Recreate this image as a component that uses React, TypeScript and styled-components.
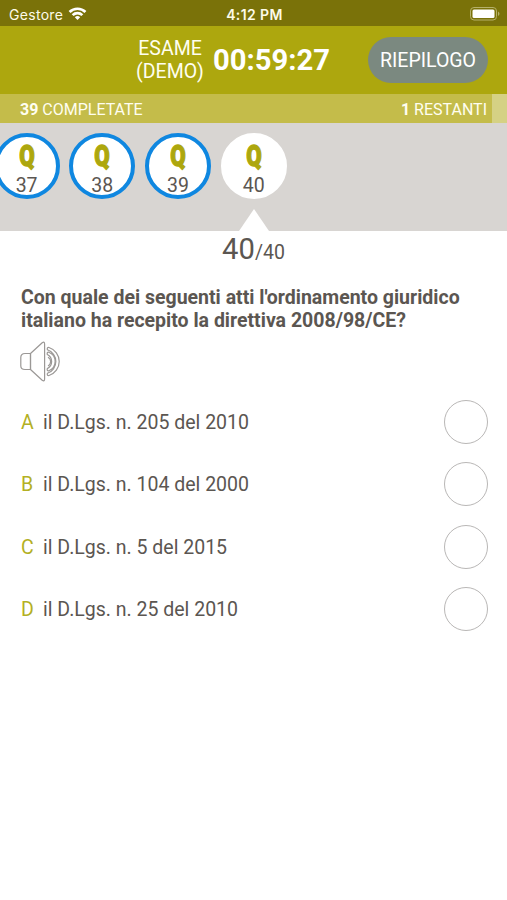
import React from "react";
import styled, { createGlobalStyle } from "styled-components";

const Global = createGlobalStyle`
  * { box-sizing: border-box; }
  body {
    margin: 0;
    background: #fff;
    font-family: Roboto, "Liberation Sans", sans-serif;
    color: #5b5651;
  }
`;

const Screen = styled.main`
  width: 507px;
  height: 900px;
  display: flex;
  flex-direction: column;
  overflow: hidden;
  background: #fff;
`;

const StatusBar = styled.div`
  height: 26px;
  flex: none;
  display: grid;
  grid-template-columns: 1fr auto 1fr;
  align-items: center;
  padding: 2px 7px 0 9px;
  background: #7a7209;
  color: #fdfbe9;
  font-family: Inter, Roboto, sans-serif;
  font-size: 14px;
`;

const Carrier = styled.div`
  display: flex;
  align-items: center;
  gap: 5px;
  letter-spacing: 0.3px;
`;

const Clock = styled.div`
  font-weight: 600;
  letter-spacing: 0.4px;
`;

const BatterySlot = styled.div`
  display: flex;
  justify-content: flex-end;
`;

const Header = styled.header`
  height: 68px;
  flex: none;
  display: flex;
  align-items: center;
  padding: 0 19px 0 136px;
  background: #ada70e;
  color: #fffef0;
`;

const ExamName = styled.div`
  width: 68px;
  text-align: center;
  font-size: 19.5px;
  line-height: 23px;
  white-space: nowrap;
`;

const Timer = styled.div`
  margin-left: 9px;
  font-size: 29.2px;
  font-weight: 700;
  line-height: 36px;
  color: #fff;
  white-space: nowrap;
`;

const SummaryButton = styled.button`
  width: 120px;
  height: 46px;
  margin-left: auto;
  padding: 1px 0 0;
  border: 0;
  border-radius: 23px;
  background: #7b8980;
  color: #fff;
  font: 400 19.5px Roboto, sans-serif;
`;

const Progress = styled.div`
  height: 29px;
  flex: none;
  display: flex;
  background: #d5d184;
`;

const ProgressFill = styled.div`
  width: 492px;
  display: flex;
  align-items: center;
  justify-content: space-between;
  padding: 1px 5px 0 20px;
  background: #c4bc4a;
  color: #fffef0;
  font-size: 16px;
`;

const QuestionStrip = styled.nav`
  height: 108px;
  flex: none;
  display: flex;
  align-items: flex-start;
  gap: 9.7px;
  padding-top: 10px;
  background: #d8d5d2;
`;

const Bubble = styled.div<{ $done?: boolean }>`
  position: relative;
  flex: none;
  width: 66px;
  height: 66px;
  display: flex;
  flex-direction: column;
  align-items: center;
  border: 4px solid ${(p) => (p.$done ? "#0f87e0" : "#fff")};
  border-radius: 50%;
  background: #fff;

  &:first-child {
    margin-left: -6.4px;
  }
`;

const BubbleMark = styled.span`
  height: 31px;
  margin-top: 4px;
  font-size: 29px;
  line-height: 31px;
  font-weight: 900;
  color: #ada70e;
  -webkit-text-stroke: 1.3px #ada70e;
  transform: scaleX(0.77);
`;

const BubbleNumber = styled.span`
  margin-top: 3px;
  font-size: 19.5px;
  line-height: 22px;
`;

const Pointer = styled.i`
  position: absolute;
  top: 72px;
  left: 14px;
  border: 15px solid transparent;
  border-top: 0;
  border-bottom: 22px solid #fff;
`;

const Counter = styled.div`
  height: 36px;
  flex: none;
  text-align: center;
  font-size: 29.2px;
  line-height: 37px;
`;

const CounterTotal = styled.span`
  font-size: 19.5px;
`;

const Question = styled.h1`
  margin: 19px 0 0 21px;
  font-size: 19.5px;
  line-height: 23px;
  font-weight: 700;
  white-space: nowrap;
`;

const Speaker = styled.button`
  width: 42px;
  height: 42px;
  margin: 8px 0 0 19px;
  padding: 0;
  border: 0;
  background: none;
  flex: none;
`;

const Answers = styled.ul`
  margin: 9px 0 0;
  padding: 0 19px 0 21px;
  list-style: none;
`;

const Answer = styled.li`
  height: 62.3px;
  display: flex;
  align-items: center;
  font-size: 19.5px;
  line-height: 24px;
`;

const Letter = styled.span`
  width: 22px;
  padding-top: 2px;
  color: #b3b024;
`;

const AnswerText = styled.span`
  flex: 1;
  padding-top: 2px;
`;

const Radio = styled.span`
  width: 44px;
  height: 44px;
  border: 1.5px solid #b9b7b6;
  border-radius: 50%;
`;

const WifiIcon = () => (
  <svg width="19" height="15" viewBox="0 0 19 15" fill="#fff">
    <path d="M.6 4.1a12.6 12.6 0 0 1 17.8 0L16.5 6a9.9 9.9 0 0 0-14 0Z" />
    <path d="M3.7 7.2a8.2 8.2 0 0 1 11.6 0l-1.9 1.9a5.5 5.5 0 0 0-7.8 0Z" />
    <path d="M6.8 10.3a3.8 3.8 0 0 1 5.4 0L9.5 13Z" />
  </svg>
);

const BatteryIcon = () => (
  <svg width="31" height="15" viewBox="0 0 31 15" fill="none">
    <rect x="1.5" y=".5" width="26" height="12.5" rx="3.5" stroke="#b5b06a" />
    <rect x="3.5" y="2.5" width="22" height="8.5" rx="1.5" fill="#fff" />
    <path d="M29 4.5V9q1.5-.7 1.5-2.25T29 4.5Z" fill="#b5b06a" />
  </svg>
);

const SpeakerIcon = () => (
  <svg
    width="42"
    height="42"
    viewBox="0 0 42 42"
    fill="none"
    stroke="#9b9896"
    strokeWidth="1.2"
    strokeLinejoin="round"
  >
    <path d="M11.5 13.5H6Q1.8 13.5 1.8 17.5V26Q1.8 29.5 6 29.5H11.5Z" />
    <path d="M11.5 13.5 23.2 2.8Q25.6 1.2 25.6 4V39Q25.6 41.8 23.2 40.3L11.5 29.5Z" />
    <path d="M30 7.5A14.7 14.7 0 0 1 30 35.5Q27.8 35.8 28.4 33.3A12.4 12.4 0 0 0 28.4 9.8Q27.8 7.2 30 7.5Z" />
    <path d="M29.8 12.2A10 10 0 0 1 29.8 30.8Q27.7 31 28.3 28.6A7.9 7.9 0 0 0 28.3 14.5Q27.7 12 29.8 12.2Z" />
    <path d="M29 17.2A5 5 0 0 1 29 26" />
  </svg>
);

const questions = [37, 38, 39, 40];
const current = 40;
const answers = [
  ["A", "il D.Lgs. n. 205 del 2010"],
  ["B", "il D.Lgs. n. 104 del 2000"],
  ["C", "il D.Lgs. n. 5 del 2015"],
  ["D", "il D.Lgs. n. 25 del 2010"],
];

export default function App() {
  return (
    <Screen>
      <Global />
      <StatusBar>
        <Carrier>
          Gestore <WifiIcon />
        </Carrier>
        <Clock>4:12 PM</Clock>
        <BatterySlot>
          <BatteryIcon />
        </BatterySlot>
      </StatusBar>
      <Header>
        <ExamName>
          ESAME
          <br />
          (DEMO)
        </ExamName>
        <Timer>00:59:27</Timer>
        <SummaryButton>RIEPILOGO</SummaryButton>
      </Header>
      <Progress>
        <ProgressFill>
          <span>
            <b>39</b> COMPLETATE
          </span>
          <span>
            <b>1</b> RESTANTI
          </span>
        </ProgressFill>
      </Progress>
      <QuestionStrip>
        {questions.map((n) => (
          <Bubble key={n} $done={n !== current}>
            <BubbleMark>Q</BubbleMark>
            <BubbleNumber>{n}</BubbleNumber>
            {n === current && <Pointer />}
          </Bubble>
        ))}
      </QuestionStrip>
      <Counter>
        40<CounterTotal>/40</CounterTotal>
      </Counter>
      <Question>
        Con quale dei seguenti atti l'ordinamento giuridico
        <br />
        italiano ha recepito la direttiva 2008/98/CE?
      </Question>
      <Speaker aria-label="Ascolta">
        <SpeakerIcon />
      </Speaker>
      <Answers>
        {answers.map(([letter, text]) => (
          <Answer key={letter}>
            <Letter>{letter}</Letter>
            <AnswerText>{text}</AnswerText>
            <Radio />
          </Answer>
        ))}
      </Answers>
    </Screen>
  );
}
